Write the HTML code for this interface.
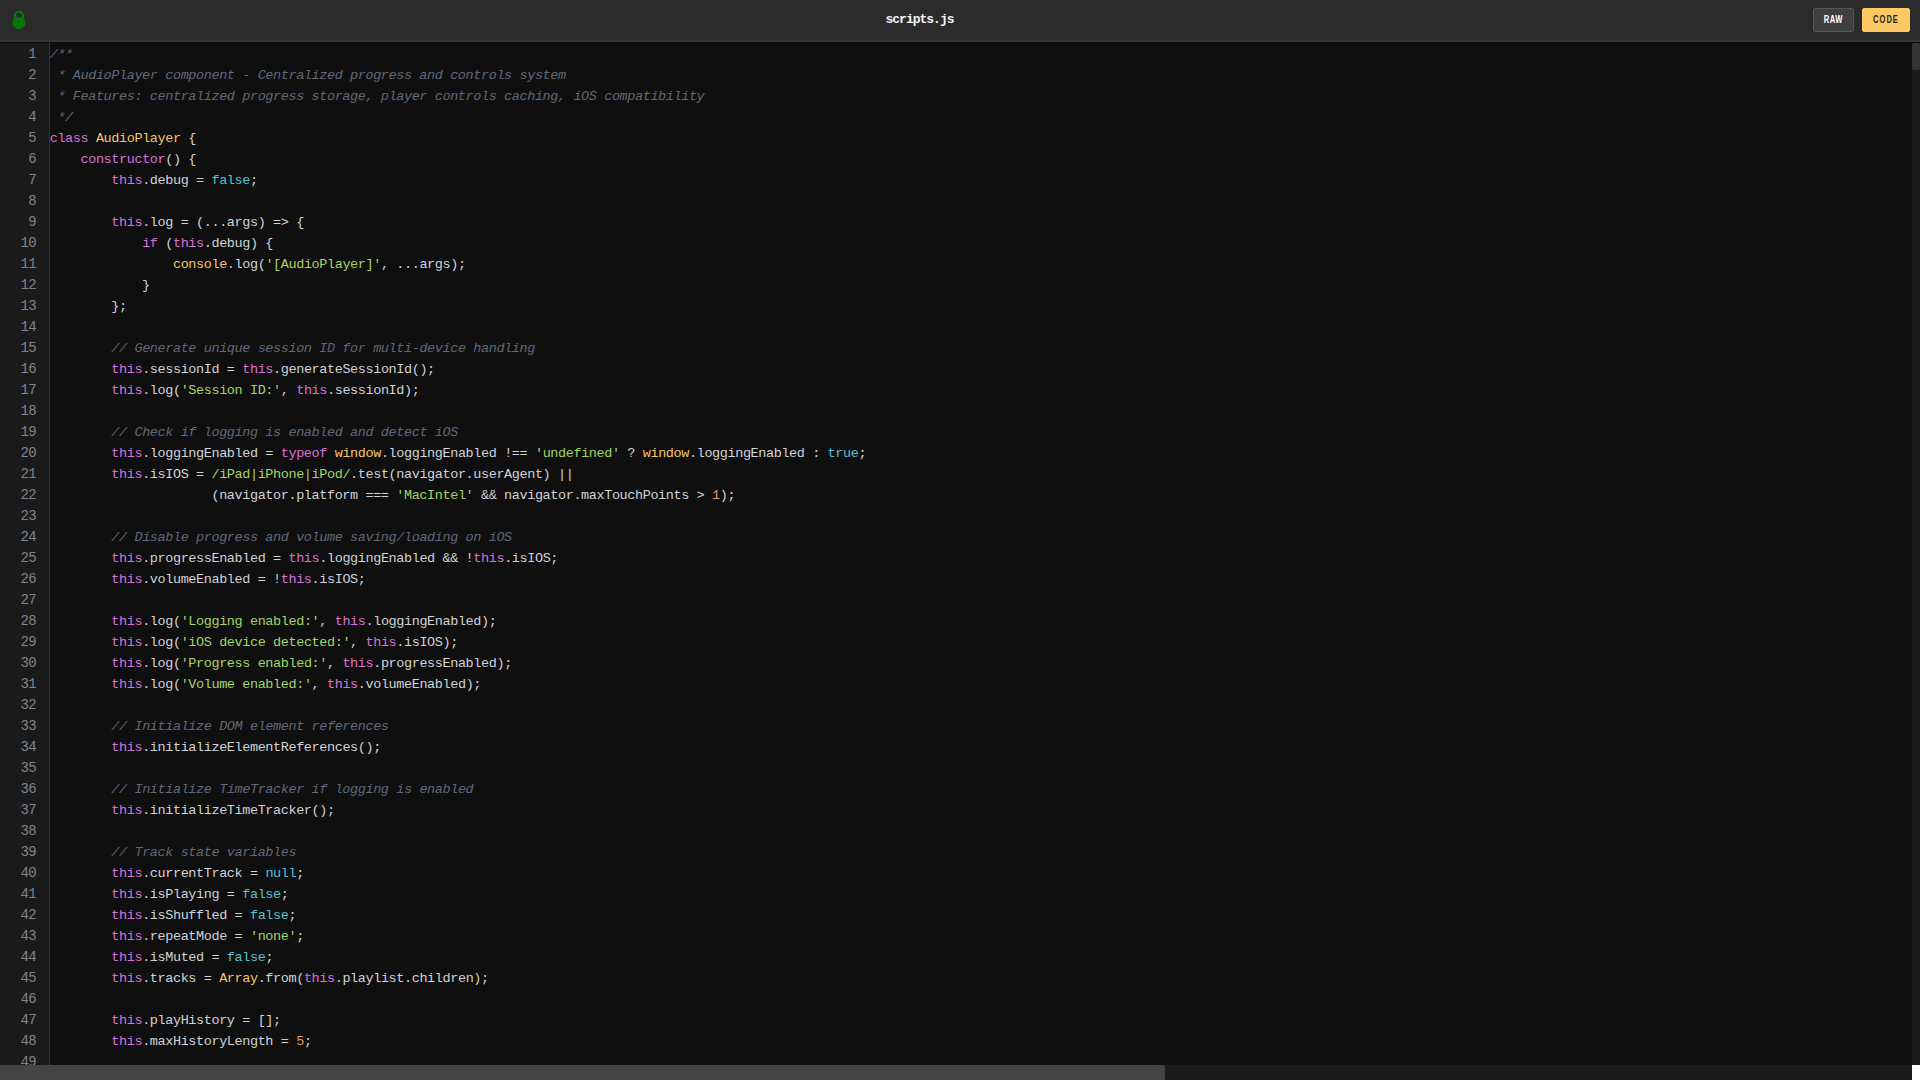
<!DOCTYPE html>
<html>
<head>
<meta charset="utf-8">
<title>scripts.js</title>
<style>
*{box-sizing:border-box;margin:0;padding:0}
html,body{width:1920px;height:1080px;overflow:hidden;background:#0f0f0f}
body{position:relative;font-family:"Liberation Mono",monospace}
#hdr{position:absolute;left:0;top:0;width:1920px;height:42px;background:#2b2b2b;border-bottom:2px solid #373737}
#lock{position:absolute;left:0;top:0;width:40px;height:40px}
#title{position:absolute;left:820px;width:200px;top:0;height:40px;line-height:39px;text-align:center;color:#f4f4f4;font-family:"Liberation Mono",monospace;font-weight:bold;font-size:13px;letter-spacing:-1px;padding-right:1px;white-space:pre}
.btn{position:absolute;top:8px;height:24px;border-radius:2px;font-family:"Liberation Sans",sans-serif;font-weight:bold;font-size:10.5px;text-align:center;line-height:20.4px}
.btn span{display:inline-block;transform:scaleX(0.72);transform-origin:50% 50%;white-space:pre}
#raw{left:1813px;width:41px;background:#404040;border:1px solid #565656;color:#fff}
#raw span{letter-spacing:0.7px;margin-right:-0.7px;position:relative;left:-1px}
#codeb{left:1862px;width:48px;background:#fdc964;border:1px solid #fdc964;color:#1f1f1f}
#codeb span{letter-spacing:1.4px;margin-right:-1.4px;position:relative;left:-0.5px}
#gutter{position:absolute;left:0;top:42px;width:50px;height:1023px;background:#1a1a1a;border-right:1px solid #333;overflow:hidden}
pre{font-family:"Liberation Mono",monospace;font-size:13.5px;letter-spacing:-0.4px;line-height:21px;white-space:pre}
#nums{position:absolute;right:13px;top:1.5px;text-align:right;color:#7f858f;font-size:14px;letter-spacing:-0.7px}
#code{position:absolute;left:50px;top:42px;width:1862px;height:1023px;overflow:hidden;color:#d0d3d8}
#code pre{position:absolute;left:-0.3px;top:1.5px}
#code i{color:#616978;font-style:italic}
#code b{color:#d772d9;font-weight:normal}
#code s{color:#a4d468;text-decoration:none}
#code q{color:#58c0d0;quotes:none}
#code q:before,#code q:after{content:none}
#code em{color:#f3c668;font-style:normal}
#code u{color:#e2975a;text-decoration:none}
#vsb{position:absolute;left:1912px;top:42px;width:8px;height:1023px;background:#1b1b1b}
#vsb div{position:absolute;left:0;top:1px;width:8px;height:27px;background:#343434;border-radius:2px}
#hsb{position:absolute;left:0;top:1065px;width:1912px;height:15px;background:#1b1b1b}
#hsb div{position:absolute;left:0;top:0;width:1165px;height:15px;background:#444;border-radius:1.5px}
#shade{position:absolute;left:0;top:42px;width:1920px;height:1px;background:#0b0b0b}
#corner{position:absolute;left:1912px;top:1065px;width:8px;height:15px;background:#fff}
</style>
</head>
<body>
<div id="hdr">
<svg id="lock" viewBox="0 0 40 40"><path d="M14.9 20V15.8a4.05 4.05 0 0 1 8.1 0V20" fill="none" stroke="#047a04" stroke-width="2.1"/><ellipse cx="18.95" cy="23" rx="6.55" ry="6.05" fill="#047a04"/><circle cx="18.95" cy="21.8" r="1.05" fill="#25302a"/><path d="M18.25 22.2h1.4l-.15 3.2h-1.1z" fill="#0a560a"/></svg>
<div id="title">scripts.js</div>
<div class="btn" id="raw"><span>RAW</span></div>
<div class="btn" id="codeb"><span>CODE</span></div>
</div>
<div id="gutter"><pre id="nums">1
2
3
4
5
6
7
8
9
10
11
12
13
14
15
16
17
18
19
20
21
22
23
24
25
26
27
28
29
30
31
32
33
34
35
36
37
38
39
40
41
42
43
44
45
46
47
48
49</pre></div>
<div id="code"><pre><i>/**</i>
<i> * AudioPlayer component - Centralized progress and controls system</i>
<i> * Features: centralized progress storage, player controls caching, iOS compatibility</i>
<i> */</i>
<b>class</b> <em>AudioPlayer</em> {
    <b>constructor</b>() {
        <b>this</b>.debug = <q>false</q>;

        <b>this</b>.log = (...args) =&gt; {
            <b>if</b> (<b>this</b>.debug) {
                <em>console</em>.log(<s>'[AudioPlayer]'</s>, ...args);
            }
        };

        <i>// Generate unique session ID for multi-device handling</i>
        <b>this</b>.sessionId = <b>this</b>.generateSessionId();
        <b>this</b>.log(<s>'Session ID:'</s>, <b>this</b>.sessionId);

        <i>// Check if logging is enabled and detect iOS</i>
        <b>this</b>.loggingEnabled = <b>typeof</b> <em>window</em>.loggingEnabled !== <s>'undefined'</s> ? <em>window</em>.loggingEnabled : <q>true</q>;
        <b>this</b>.isIOS = <s>/iPad|iPhone|iPod/</s>.test(navigator.userAgent) ||
                     (navigator.platform === <s>'MacIntel'</s> &amp;&amp; navigator.maxTouchPoints &gt; <u>1</u>);

        <i>// Disable progress and volume saving/loading on iOS</i>
        <b>this</b>.progressEnabled = <b>this</b>.loggingEnabled &amp;&amp; !<b>this</b>.isIOS;
        <b>this</b>.volumeEnabled = !<b>this</b>.isIOS;

        <b>this</b>.log(<s>'Logging enabled:'</s>, <b>this</b>.loggingEnabled);
        <b>this</b>.log(<s>'iOS device detected:'</s>, <b>this</b>.isIOS);
        <b>this</b>.log(<s>'Progress enabled:'</s>, <b>this</b>.progressEnabled);
        <b>this</b>.log(<s>'Volume enabled:'</s>, <b>this</b>.volumeEnabled);

        <i>// Initialize DOM element references</i>
        <b>this</b>.initializeElementReferences();

        <i>// Initialize TimeTracker if logging is enabled</i>
        <b>this</b>.initializeTimeTracker();

        <i>// Track state variables</i>
        <b>this</b>.currentTrack = <q>null</q>;
        <b>this</b>.isPlaying = <q>false</q>;
        <b>this</b>.isShuffled = <q>false</q>;
        <b>this</b>.repeatMode = <s>'none'</s>;
        <b>this</b>.isMuted = <q>false</q>;
        <b>this</b>.tracks = <em>Array</em>.from(<b>this</b>.playlist.children);

        <b>this</b>.playHistory = [];
        <b>this</b>.maxHistoryLength = <u>5</u>;
</pre></div>
<div id="vsb"><div></div></div>
<div id="hsb"><div></div></div>
<div id="shade"></div>
<div id="corner"></div>
</body>
</html>
